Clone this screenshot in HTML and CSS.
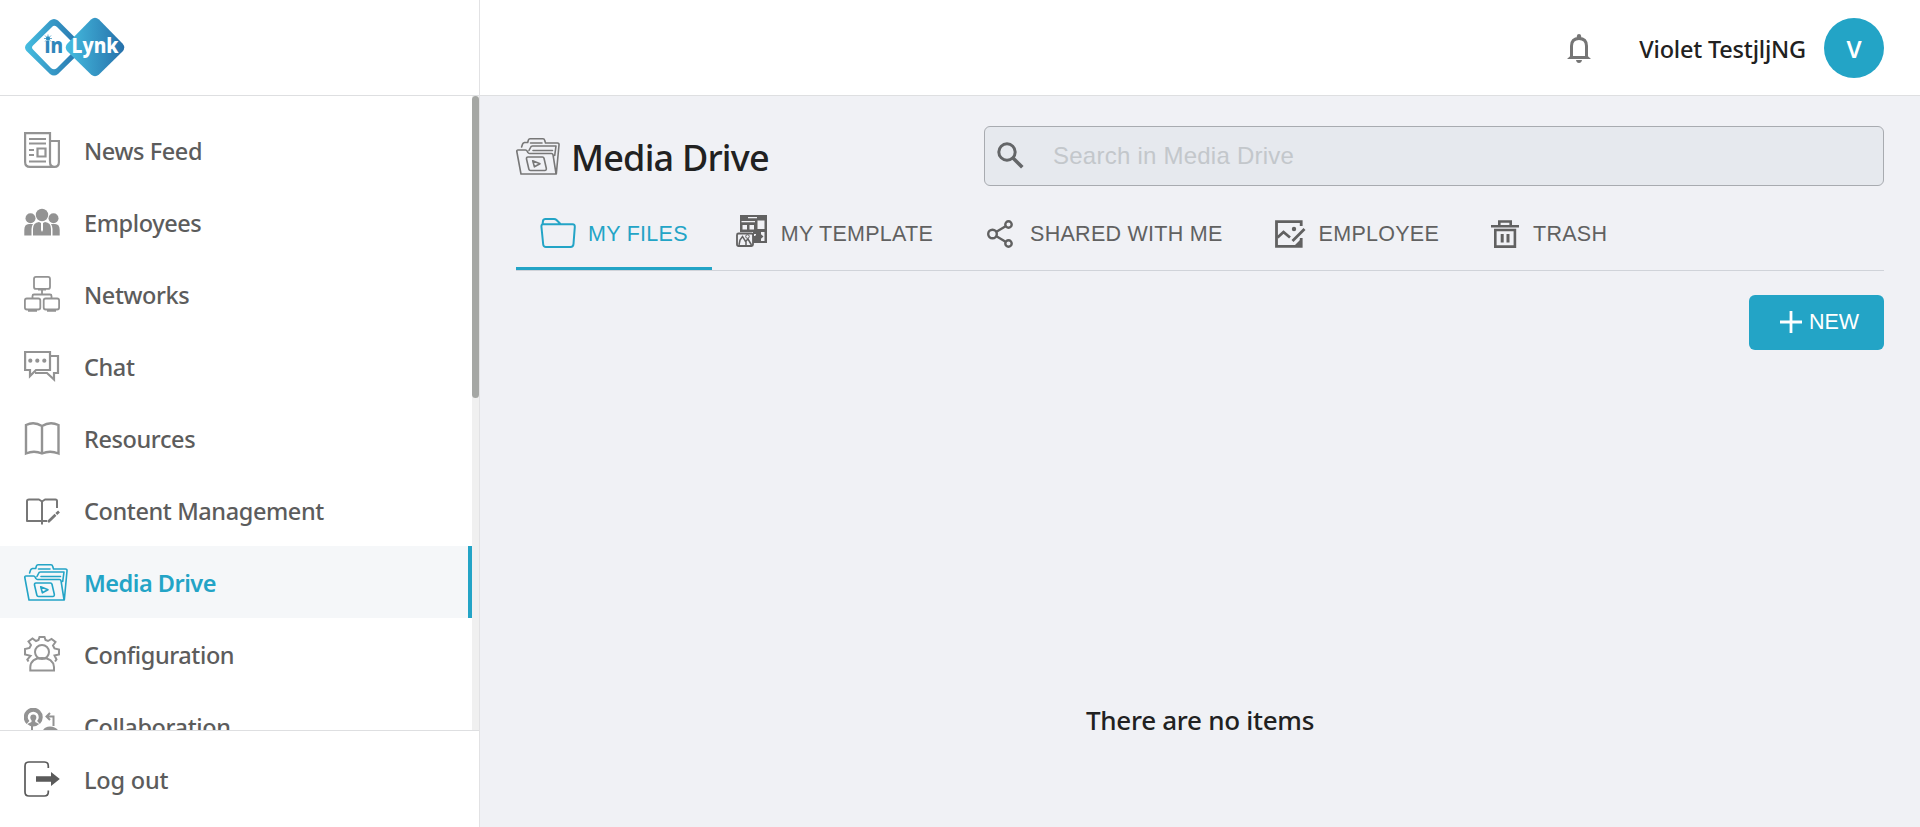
FILE: index.html
```html
<!DOCTYPE html>
<html lang="en">
<head>
<meta charset="utf-8">
<title>Media Drive</title>
<link rel="stylesheet" href="styles.css">
</head>
<body>
<svg class="defs" aria-hidden="true">
  <symbol id="folder-media" viewBox="0 0 44 37">
    <g fill="none" stroke="currentColor" stroke-width="1.600" stroke-linejoin="round" stroke-linecap="round">
      <path d="M5 36 .8 13.500Q.6 12 2 12h7.500q1.200 0 1.700 1.200l.7 1.300q.5 1 1.700 1H35.500q1.200 0 1.500 1.200L40 35.500M5 36H40.300L43 7q.2-2-1.500-2H29.500L28.600 2Q28.300.8 27 .8H14q-1.200 0-1.600 1.200L11.700 4.500H8.500Q7 4.800 6.500 6.300L5.600 9"/>
      <path d="M14.500 5H26M13 12.500 14.500 9.500Q15 8 16.500 8H40L38.700 17.500M17 12.500H36.500"/>
      <path d="M12 19H26.500q1.200 0 1.500 1.200l2.300 10q.3 2.300-1.500 2.300H14.500q-1.300 0-1.600-1.200L10.500 21q-.3-2 1.500-2ZM16.700 22.800l7.300 3-5.600 3Z"/>
    </g>
  </symbol>
</svg>
<div class="app">
  <aside class="sidebar">
    <div class="brand">
      <svg class="logo" width="102" height="62" viewBox="0 0 102 62">
        <defs>
          <linearGradient id="lg1" x1="0" x2="1"><stop offset="0" stop-color="#45bde0"/><stop offset="1" stop-color="#2670aa"/></linearGradient>
        </defs>
        <path d="M26 3.500Q30 .5 34 3.500L57 26.500Q60 30.500 57 34.500L34 57Q30 60 26 57L2.500 34Q-.5 30.500 2.500 27ZM28 10 9 28.500Q7 30.500 9 32.500L27 51Q30 53.500 33 51L51.500 32.500Q53.500 30.500 51.500 28.500L33 10Q30 7.500 28 10Z" fill="url(#lg1)" fill-rule="evenodd"/>
        <path d="M67 2.500Q71 -.8 75 2.500L98.500 26.500Q102 30.500 98.500 34.500L75 57.500Q71 61 67 57.500L43 34Q40.500 30.500 43 27Z" fill="url(#lg1)"/>
        <g stroke="#2b8fc0" stroke-width=".7"><circle cx="24" cy="21.500" r="1.800" fill="#2b8fc0"/><path d="M20 21.500h8M24 17.500v8M21 18.500l6 6M27 18.500l-6 6"/></g>
        <text class="logo-in" x="20.500" y="36" textLength="18.500" lengthAdjust="spacingAndGlyphs" fill="#2f86bb">ın</text>
        <text class="logo-lynk" x="47.500" y="36" textLength="47" lengthAdjust="spacingAndGlyphs" fill="#fff">Lynk</text>
      </svg>
    </div>
    <div class="scroller">
      <nav class="nav">
        <a class="item"><svg class="ico" viewBox="0 0 36 36"><g fill="none" stroke="currentColor" stroke-width="2.200"><path d="M31 34.900H6Q1.100 34.900 1.100 30V1.100H26V30Q26 34.900 30.500 34.900Q34.900 34.900 34.900 30V9H26"/><path d="M5 7H22M5 11.500H22M5 18H10M5 23H10M5 29.500H22M13.500 16.500h8v8h-8z"/></g></svg><span>News Feed</span></a>
        <a class="item"><svg class="ico" viewBox="0 0 36 36"><g fill="currentColor"><circle cx="18" cy="11" r="6.200"/><circle cx="6.500" cy="14.300" r="5"/><circle cx="29.500" cy="14.300" r="5"/><path d="M9 31.500V25Q9 18.500 15 18l2 1v7l1 2 1-2v-7l2-1Q27 18.500 27 25V31.500ZM.3 31.500V26Q.3 20 5 20h4q-1.500 2-1.500 5v6.500ZM35.700 31.500V26Q35.700 20 31 20h-4q1.500 2 1.500 5v6.500Z"/></g></svg><span>Employees</span></a>
        <a class="item"><svg class="ico" viewBox="0 0 36 36"><g fill="none" stroke="currentColor" stroke-width="1.800"><rect x="10" y=".9" width="16" height="12" rx="2"/><rect x=".9" y="22.500" width="15.400" height="11" rx="2"/><rect x="19.700" y="22.500" width="15.400" height="11" rx="2"/><path d="M14 13.500h8M18 13v5M8.500 22v-2q0-1.500 1.500-1.500H26q1.500 0 1.500 1.500v2M4 34.900h9M23 34.900h9"/></g></svg><span>Networks</span></a>
        <a class="item"><svg class="ico" viewBox="0 0 36 36"><g fill="none" stroke="currentColor" stroke-width="2.200"><path d="M1.100 4H26V22H12L6 28V22H1.100ZM26 8H34V25H30V31.500L23 25H11"/></g><g fill="currentColor"><circle cx="6.300" cy="12.700" r="2.100"/><circle cx="13.300" cy="12.700" r="2.100"/><circle cx="20.300" cy="12.700" r="2.100"/></g></svg><span>Chat</span></a>
        <a class="item"><svg class="ico" viewBox="0 0 36 36"><path fill="none" stroke="currentColor" stroke-width="2.400" d="M18 6Q10 1 2 5V33.500Q10 30 18 33.500Q26 30 34.500 33.500V5Q26 1 18 6V33.500"/></svg><span>Resources</span></a>
        <a class="item dark"><svg class="ico" viewBox="0 0 36 36"><g fill="none" stroke="currentColor" stroke-width="2" stroke-linejoin="round"><path d="M23 29H3V9Q3 7.500 5 7.500H15L18 9.500 21 7.500H31.500Q33 7.500 33 9V16M18 9V32.500"/><path stroke-width="2.700" d="M24 30 31.500 22.800M32.300 22 35 19.500"/></g></svg><span>Content Management</span></a>
        <a class="item active"><svg class="ico-wide"><use href="#folder-media"/></svg><span>Media Drive</span></a>
        <a class="item"><svg class="ico" viewBox="0 0 36 36"><g fill="none" stroke="currentColor" stroke-width="2"><path d="M4.500 25.500 3.300 23.500 6.500 19.800 1 18.500V13L5.500 12 7 9 4.500 5.500 8.500 2.500 12 5 14.500 4 15.500 1H20.500L21.500 4 24 5 27.500 3 31.500 6 29 9.500 30.500 12.500 35 13.500V18.500L30.500 19.500 32.500 23.500 31 25.500"/><circle cx="18" cy="16" r="7"/><path d="M6.300 34.500V31Q7 22 18 22T30 31V34.500Z"/></g></svg><span>Configuration</span></a>
        <a class="item"><svg class="ico" viewBox="0 0 36 36"><g fill="none" stroke="currentColor"><path stroke-width="4" d="M4 14.500A7.500 7.500 0 1 1 14.500 14.500"/><path stroke-width="2" d="M29.500 18V8.500H23M26 5 22.500 8.500 26 12M8 16V34"/></g><g fill="currentColor"><circle cx="9.300" cy="9.500" r="3"/><path d="M7.500 11h3.700v3l4 2q-6 5-12 0l4.300-2ZM18.500 23.500Q20 18.500 26 18.500T35 23.500Z"/></g></svg><span>Collaboration</span></a>
      </nav>
      <div class="track"><div class="thumb"></div></div>
    </div>
    <div class="logout"><svg class="ico" viewBox="0 0 36 36"><path fill="none" stroke="currentColor" stroke-width="1.700" d="M24.300 7V5Q24.300 1 20.300 1H5Q1 1 1 5V31Q1 35 5 35H20.300Q24.300 35 24.300 31V29.500"/><path fill="currentColor" d="M12 15.300H27V11L35.800 18 27 25V20.800H12Z"/></svg><span>Log out</span></div>
  </aside>
  <div class="page">
    <header class="topbar">
      <svg class="bell" viewBox="0 0 24 29"><path fill="none" stroke="currentColor" stroke-width="3" d="M4.500 24V12Q4.500 4.500 12 4.500T19.500 12V24"/><path fill="currentColor" d="M0 25 3.300 22H20.700L24 25ZM9 26H15Q14.500 29 12 29T9 26ZM9.800 4V2.200Q10 0 12 0T14.200 2.200V4Z"/></svg>
      <span class="user">Violet TestjljNG</span>
      <span class="avatar">V</span>
    </header>
    <main class="main">
      <div class="head">
        <h1 class="title"><svg class="ico-wide"><use href="#folder-media"/></svg><span>Media Drive</span></h1>
        <div class="search"><svg viewBox="0 0 27 27"><circle cx="10" cy="10" r="8.200" fill="none" stroke="currentColor" stroke-width="3"/><path stroke="currentColor" stroke-width="3.600" d="M16 16 25.300 25.300"/></svg><span>Search in Media Drive</span></div>
      </div>
      <div class="tabs">
        <div class="tab on"><svg class="i-files" viewBox="0 0 36 30"><path fill="none" stroke="currentColor" stroke-width="2" stroke-linejoin="round" d="M1.500 9.500Q1 6.300 3 6.300H32.500Q35 6.300 34.800 9L33.500 26Q33.300 29 30.500 29H6Q3.500 29 3.200 26.500ZM2.500 6.500 3 3Q3.300 1 5.500 1H14Q15.500 1 16.500 2L20.500 6"/></svg><span>MY FILES</span></div>
        <div class="tab"><svg class="i-temp" viewBox="0 0 32 32"><path fill="currentColor" fill-rule="evenodd" d="M4 0H31V28H17V17H4ZM12 2V3.300H21V2ZM5.500 6V7.200H19V6ZM6.500 10V14.500H11V10ZM13.500 10V14.500H18V10ZM21.500 5.500V14H28.500V5.500ZM18 19H20V21H18ZM25 17V26H28.500V17Z"/><rect x="1" y="18.500" width="16" height="12.500" rx="1.500" fill="#f0f1f5" stroke="currentColor" stroke-width="1.800"/><path fill="none" stroke="currentColor" stroke-width="1.500" d="M3 30 4 25 6.500 21.500 10 27V30M9 27 12 24 15.500 30"/><circle cx="11.500" cy="21.500" r="1.800" fill="none" stroke="currentColor"/><path fill="currentColor" d="M19 20.500H23V17.500L27.500 21.500 23 25.500V22.500H19Z"/></svg><span>MY TEMPLATE</span></div>
        <div class="tab"><svg class="i-share" viewBox="0 0 26 28"><g fill="none" stroke="currentColor" stroke-width="2.400"><circle cx="5.500" cy="14" r="4.300"/><circle cx="21.500" cy="4.500" r="3.200"/><circle cx="21.500" cy="23.500" r="3.200"/><path d="M9 12 19 6M9 16 19 22"/></g></svg><span>SHARED WITH ME</span></div>
        <div class="tab"><svg class="i-empl" viewBox="0 0 31 28"><g fill="none" stroke="currentColor" stroke-width="2.800"><path d="M26.200 6V1.600H1.500V26.400H26.200V18"/><path d="M2.500 17.500 8.500 12 15 17.500M17.500 21 29.500 9"/></g><circle cx="19" cy="9" r="2.200" fill="currentColor"/><path fill="currentColor" d="M20 25 27 18V27Z"/></svg><span>EMPLOYEE</span></div>
        <div class="tab"><svg class="i-trash" viewBox="0 0 28 28"><g fill="none" stroke="currentColor" stroke-width="2.600"><path d="M0 6.300H28M8.300 6V1.500H19.700V6M4.300 10H23.900V26.600H4.300Z"/><path stroke-width="3" d="M11.200 14V22.500M17 14V22.500"/></g></svg><span>TRASH</span></div>
      </div>
      <div class="actions"><button class="new"><svg viewBox="0 0 22 22"><path stroke="currentColor" stroke-width="2.800" d="M0 11H22M11 0V22"/></svg><span>NEW</span></button></div>
      <div class="empty"><span>There are no items</span></div>
    </main>
  </div>
</div>
</body>
</html>
```
FILE: styles.css
```css
* { box-sizing: border-box; }
body { margin: 0; font-family: "Noto Sans", sans-serif; color: #212121; }
svg { display: block; flex: none; }
.defs { position: absolute; width: 0; height: 0; }
.app { display: flex; width: 1920px; height: 827px; overflow: hidden; }

.sidebar { width: 480px; border-right: 1px solid #e2e2e4; display: flex; flex-direction: column; background: #fff; flex: none; }
.brand { height: 96px; border-bottom: 1px solid #dedfe1; padding: 17px 0 0 24px; flex: none; }
.logo text { font-family: "Noto Sans", sans-serif; font-weight: 800; font-size: 20.5px; }
.scroller { flex: 1; min-height: 0; display: flex; overflow: hidden; }
.nav { flex: 1; padding-top: 18px; }
.item, .logout { display: flex; align-items: center; font-size: 23.5px; font-weight: 500; letter-spacing: -.4px; color: #5c5c5c; white-space: nowrap; }
.item { height: 72px; padding-left: 24px; }
.item span, .logout span { line-height: 32px; padding-top: 2px; }
.ico { width: 36px; height: 36px; margin-right: 24px; color: #939393; }
.dark .ico { color: #777; }
.ico-wide { width: 44px; height: 37px; }
.item .ico-wide { margin-right: 16px; }
.active { background: #f5f7f9; color: #23a4c6; font-weight: 600; letter-spacing: -.5px; border-right: 4px solid #23a4c6; }
.track { width: 7px; background: #f0f0f0; }
.thumb { height: 302px; border-radius: 4px; background: #a5a7a4; }
.logout { height: 97px; border-top: 1px solid #dedfe1; padding-left: 24px; letter-spacing: -.2px; flex: none; }
.logout .ico { color: #5a5a5a; }

.page { flex: 1; display: flex; flex-direction: column; background: #f0f1f5; }
.topbar { height: 96px; background: #fff; border-bottom: 1px solid #dedfe1; display: flex; align-items: center; justify-content: flex-end; padding-right: 36px; flex: none; }
.bell { width: 24px; height: 29px; color: #757575; margin: 2px 48px 0 0; }
.user { font-size: 23.5px; font-weight: 500; letter-spacing: -.2px; margin-right: 18px; padding-top: 2px; }
.avatar { width: 60px; height: 60px; border-radius: 50%; background: #23a4c6; color: #fff; font-size: 24px; font-weight: 600; display: flex; align-items: center; justify-content: center; padding-top: 2px; }

.main { flex: 1; padding: 30px 36px 0; display: flex; flex-direction: column; }
.head { display: flex; justify-content: space-between; }
.title { margin: 0; height: 60px; display: flex; align-items: center; gap: 11px; font-size: 36px; font-weight: 500; letter-spacing: -.8px; }
.title span { padding-top: 2px; }
.title .ico-wide { color: #777; }
.search { width: 900px; height: 60px; border: 1px solid #a8abb0; border-radius: 6px; background: #e6e9ee; display: flex; align-items: center; padding-left: 12px; gap: 29px; font: 24px "Liberation Sans", sans-serif; letter-spacing: .24px; color: #c3c7cb; }
.search svg { width: 27px; height: 27px; margin-bottom: 2px; color: #646668; }
.tabs { display: flex; height: 85px; border-bottom: 1px solid #d0d3d9; font: 21.5px "Liberation Sans", sans-serif; color: #616161; }
.tab { height: 84px; display: flex; align-items: center; padding: 12px 24px 0; letter-spacing: .27px; border-bottom: 0 solid #23a4c6; }
.on { color: #23a4c6; border-bottom-width: 3px; padding-top: 15px; }
.i-files { width: 36px; height: 30px; margin: 0 12px 2px 0; }
.i-temp { width: 32px; height: 32px; margin: 0 13px 6px 0; }
.i-share { width: 26px; height: 28px; margin: 0 17px 0 6px; }
.i-empl { width: 31px; height: 28px; margin: 0 13px 0 4px; }
.i-trash { width: 28px; height: 28px; margin: 0 14px 0 4px; }
.actions { display: flex; justify-content: flex-end; padding-top: 24px; }
.new { width: 135px; height: 55px; border: 0; border-radius: 6px; background: #23a4c6; color: #fff; font: 21.5px "Liberation Sans", sans-serif; display: flex; align-items: center; padding: 0 0 0 31px; gap: 7px; }
.new svg { width: 22px; height: 22px; margin-bottom: 1px; }
.empty { flex: 1; display: flex; align-items: flex-end; justify-content: center; padding-bottom: 89px; font-size: 26px; font-weight: 500; letter-spacing: -.28px; }
```
